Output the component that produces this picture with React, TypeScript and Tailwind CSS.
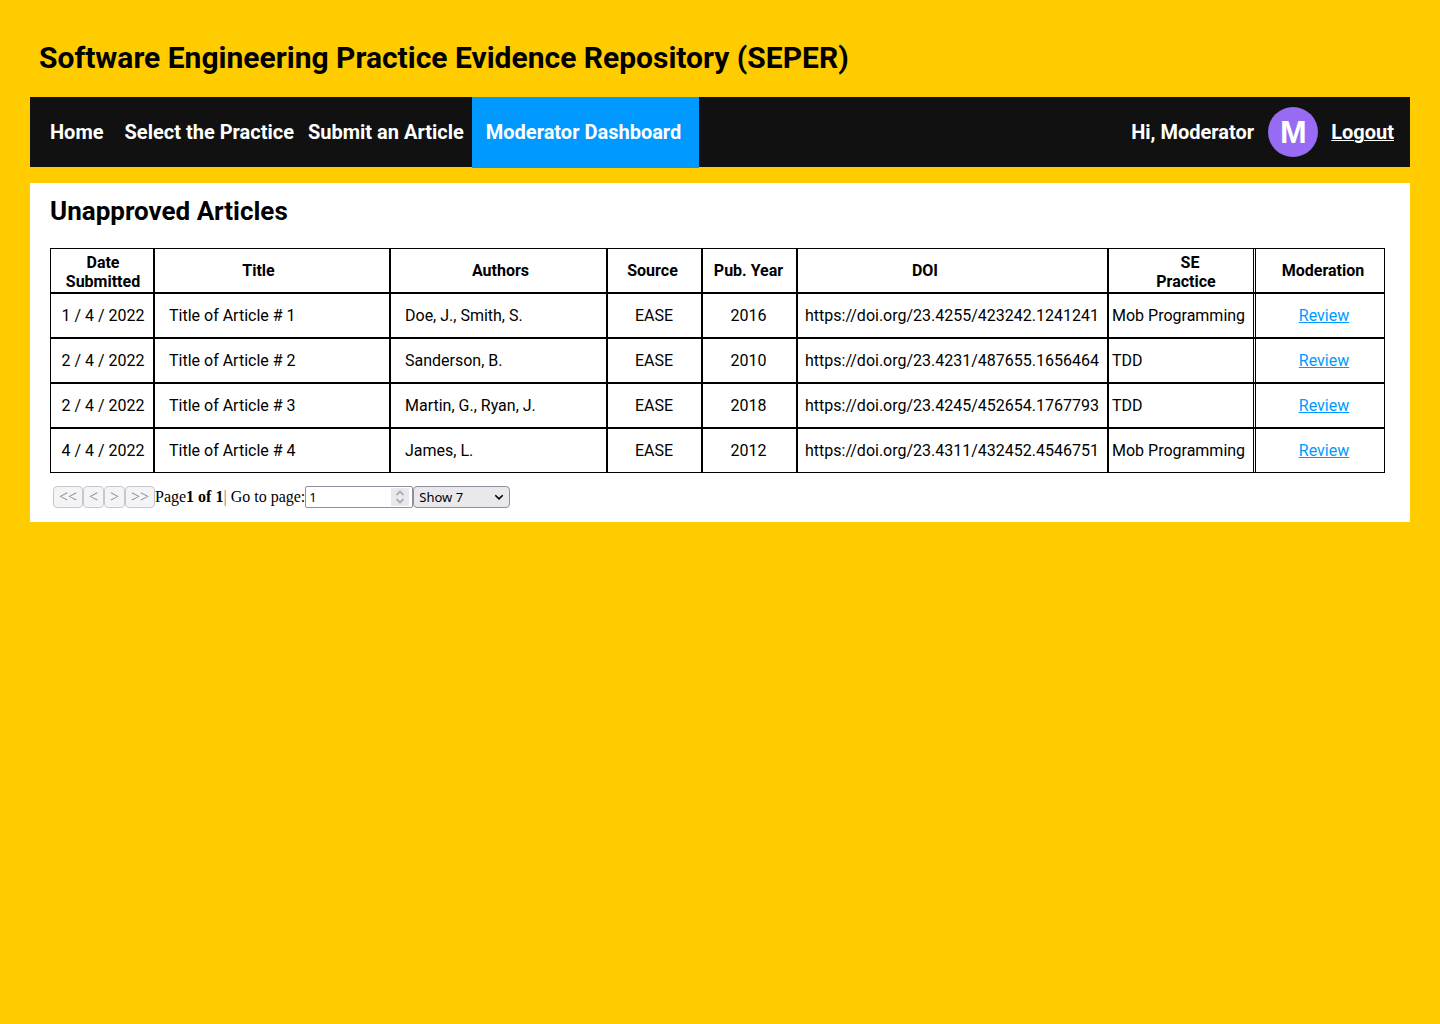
import { useState } from "react";

const articles = [
  { date: "1 / 4 / 2022", title: "Title of Article # 1", authors: "Doe, J., Smith, S.", source: "EASE", year: 2016, doi: "https://doi.org/23.4255/423242.1241241", practice: "Mob Programming" },
  { date: "2 / 4 / 2022", title: "Title of Article # 2", authors: "Sanderson, B.", source: "EASE", year: 2010, doi: "https://doi.org/23.4231/487655.1656464", practice: "TDD" },
  { date: "2 / 4 / 2022", title: "Title of Article # 3", authors: "Martin, G., Ryan, J.", source: "EASE", year: 2018, doi: "https://doi.org/23.4245/452654.1767793", practice: "TDD" },
  { date: "4 / 4 / 2022", title: "Title of Article # 4", authors: "James, L.", source: "EASE", year: 2012, doi: "https://doi.org/23.4311/432452.4546751", practice: "Mob Programming" },
];

const pagerButtons = [
  { text: "<<", label: "First page", width: "w-[30px]" },
  { text: "<", label: "Previous page", width: "w-[21px]" },
  { text: ">", label: "Next page", width: "w-[21px]" },
  { text: ">>", label: "Last page", width: "w-[30px]" },
];

function Navigation() {
  return (
    <nav className="flex h-[70px] items-center bg-[#111111] pr-4 pl-5 text-xl font-bold whitespace-nowrap text-white">
      <a href="#home">Home</a>
      <a href="#practice" className="ml-[21px]">Select the Practice</a>
      <a href="#submit" className="ml-[14px]">Submit an Article</a>
      <a href="#dashboard" aria-current="page" className="-mb-px ml-2 flex h-[71px] items-center bg-[#0099ff] pr-[18px] pb-px pl-[14px]">
        Moderator Dashboard
      </a>
      <span className="ml-auto">Hi, Moderator</span>
      <span className="ml-[14px] flex size-[50px] items-center justify-center rounded-full bg-[#976bf3] font-['Liberation_Sans',sans-serif] text-[32px] leading-none">M</span>
      <a href="#logout" className="ml-[13px] underline decoration-1">Logout</a>
    </nav>
  );
}

function ArticlesTable() {
  return (
    <table className="w-full table-fixed border-separate border-spacing-0 text-base leading-[19px] whitespace-nowrap [&_td]:border [&_td]:border-black [&_th]:border [&_th]:border-black">
      <colgroup>
        <col className="w-[104px]" />
        <col className="w-[236px]" />
        <col className="w-[217px]" />
        <col className="w-[95px]" />
        <col className="w-[95px]" />
        <col className="w-[311px]" />
        <col className="w-[148px]" />
        <col className="w-[129px]" />
      </colgroup>
      <thead>
        <tr className="h-[45px]">
          <th className="pt-[2px] pl-[2px]">Date<br />Submitted</th>
          <th className="pr-[27px]">Title</th>
          <th className="pl-1">Authors</th>
          <th className="pr-1">Source</th>
          <th className="pr-[2px]">Pub. Year</th>
          <th className="pr-[55px]">DOI</th>
          <th className="!border-r-[3px] ![border-right-style:double] pt-[2px] pl-[10px]">
            <span className="pl-2">SE</span><br />Practice
          </th>
          <th className="!border-l-0 pl-[6px]">Moderation</th>
        </tr>
      </thead>
      <tbody>
        {articles.map((a) => (
          <tr key={a.title} className="h-[45px]">
            <td className="pl-[2px] text-center">{a.date}</td>
            <td className="pl-[14px]">{a.title}</td>
            <td className="pl-[14px]">{a.authors}</td>
            <td className="pr-px text-center">{a.source}</td>
            <td className="pr-[2px] text-center">{a.year}</td>
            <td className="pl-[7px]">{a.doi}</td>
            <td className="!border-r-[3px] ![border-right-style:double] pl-[3px]">{a.practice}</td>
            <td className="!border-l-0 pl-2 text-center">
              <a href="#review" className="text-[#0099ff] underline">Review</a>
            </td>
          </tr>
        ))}
      </tbody>
    </table>
  );
}

function Pagination() {
  const [page, setPage] = useState("1");
  return (
    <div className="mt-[13px] ml-[3px] flex h-[22px] items-center font-['Liberation_Serif',serif] text-base whitespace-nowrap">
      {pagerButtons.map((b) => (
        <button
          key={b.label}
          type="button"
          disabled
          aria-label={b.label}
          className={`${b.width} flex h-[22px] items-center justify-center rounded-[4px] border border-[#c7c7cf] bg-[#f4f4f6] text-base leading-5 text-[#85858a]`}
        >
          {b.text}
        </button>
      ))}
      <span>Page</span>
      <strong>1 of 1</strong>
      <label htmlFor="page" className="whitespace-pre"><span className="text-[#777]">|</span> Go to page:</label>
      <span className="relative flex">
        <input
          id="page"
          type="text"
          inputMode="numeric"
          value={page}
          onChange={(e) => setPage(e.target.value)}
          className="h-[22px] w-[108px] rounded-[2px] border border-[#8f8f9d] bg-white pl-[3px] font-['Noto_Sans',sans-serif] text-[13px]"
        />
        <span className="pointer-events-none absolute top-[2px] right-1 flex h-[18px] w-[18px] items-center justify-center bg-[#e9e9ed]">
          <svg width="10" height="14" viewBox="0 0 10 14" fill="none" stroke="#a3a3ad" strokeWidth="1.6" aria-hidden="true">
            <path d="M1.5 5 5 1.5 8.5 5M1.5 9 5 12.5 8.5 9" />
          </svg>
        </span>
      </span>
      <span className="relative flex">
        <select
          aria-label="Rows per page"
          className="h-[22px] w-[97px] appearance-none rounded-[4px] border border-[#8f8f9d] bg-[#e9e9ed] pl-[5px] font-['Noto_Sans',sans-serif] text-[13px] leading-5"
        >
          <option>Show 7</option>
        </select>
        <svg className="pointer-events-none absolute top-2 right-[6px]" width="10" height="7" viewBox="0 0 10 7" fill="none" stroke="#000" strokeWidth="1.6" aria-hidden="true">
          <path d="M1.3 1.2 5 4.9 8.7 1.2" />
        </svg>
      </span>
    </div>
  );
}

export default function App() {
  return (
    <div className="min-h-screen bg-[#ffcc00] px-[30px] pt-10 font-['Roboto',sans-serif] text-black">
      <h1 className="mb-[21px] pl-[9px] text-3xl leading-9 font-bold">
        Software Engineering Practice Evidence Repository (SEPER)
      </h1>
      <Navigation />
      <main className="mt-4 bg-white pt-3 pr-[25px] pb-[14px] pl-5">
        <h2 className="mb-[21px] text-[26px] leading-8 font-bold">Unapproved Articles</h2>
        <ArticlesTable />
        <Pagination />
      </main>
    </div>
  );
}
